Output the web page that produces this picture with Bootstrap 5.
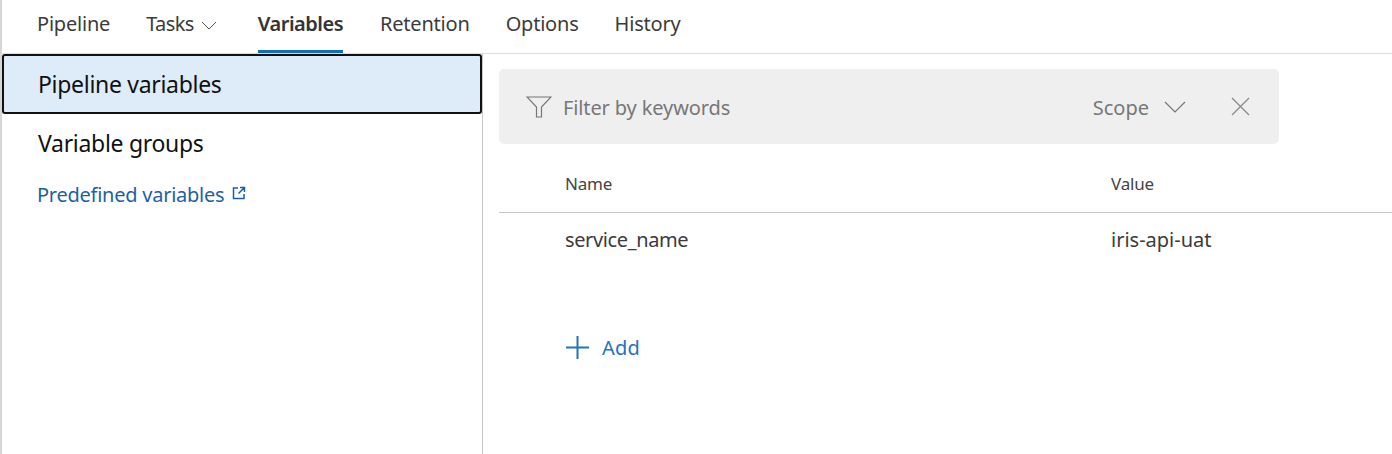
<!DOCTYPE html>
<html lang="en">
<head>
    <meta charset="UTF-8">
    <meta name="viewport" content="width=device-width, initial-scale=1.0">
    <title>Pipeline variables</title>
    <link rel="stylesheet" href="https://cdn.jsdelivr.net/npm/bootstrap@5.3.0/dist/css/bootstrap.min.css">
    <style>
        html, body { height: 100%; overflow: hidden; }
        body { font-family: "Noto Sans", "Open Sans", sans-serif; color: #3b3b3b; background: #fff; font-size: 20px; }
        .page-wrap { height: 454px; border-left: 2px solid #d6d6d6; }
        .tab-bar { height: 54px; border-bottom: 1px solid #dcdcdc; padding-left: 35px; gap: 36px; }
        .tab-item { height: 53px; padding-top: 10px; color: #3b3b3b; text-decoration: none; letter-spacing: -.2px; line-height: 27px; }
        .tab-item.on { font-weight: 600; border-bottom: 3px solid #106ebe; letter-spacing: -.5px; color: #333; margin-right: 1px; }
        .tab-item .tight { letter-spacing: -.6px; }
        .tab-item svg { margin-left: 7px; margin-right: 5px; vertical-align: 1px; }
        .side-pane { width: 481px; height: 400px; border-right: 1px solid #c8c8c8; flex: none; }
        .side-row { height: 59px; padding-left: 36px; font-size: 23px; line-height: 59px; color: #111; letter-spacing: -.3px; }
        .side-row.on { height: 60px; background: #deecf9; border: 2px solid #111; border-radius: 3px; line-height: 56px; padding-left: 34px; }
        .doc-link { display: block; margin-left: 35px; margin-top: 8px; color: #1d5fa5; text-decoration: none; line-height: 28px; letter-spacing: -.25px; }
        .doc-link svg { margin-left: 8px; vertical-align: 2px; }
        .main-pane { padding-left: 16px; }
        .filter-box { width: 780px; height: 75px; margin-top: 15px; background: #efefef; border-radius: 5px; color: #777; padding-left: 27px; }
        .filter-box .hint { margin-left: 11px; letter-spacing: -.12px; padding-top: 2px; }
        .scope-part { margin-left: auto; }
        .scope-part span { padding-top: 2px; }
        .scope-part svg { margin-left: 15px; }
        .clear-x { margin-left: 45px; margin-right: 29px; }
        .grid-head { height: 69px; border-bottom: 1px solid #c8c8c8; font-size: 17px; color: #444; padding-top: 27px; line-height: 26px; letter-spacing: -.2px; }
        .grid-row { padding-top: 12px; line-height: 30px; letter-spacing: -.38px; }
        .grid-row .val-cell { letter-spacing: 0; }
        .col-name { width: 612px; padding-left: 66px; flex: none; }
        .add-btn { margin-left: 66px; margin-top: 78px; color: #2273bf; line-height: 28px; gap: 12px; letter-spacing: .2px; }
        .add-btn span { padding-top: 1px; }
    </style>
</head>
<body>
    <div class="page-wrap">
        <!-- Tabs -->
        <div class="tab-bar d-flex">
            <a class="tab-item" href="#">Pipeline</a>
            <a class="tab-item" href="#"><span class="tight">Tasks</span><svg width="16" height="9" viewBox="0 0 16 9" fill="none" stroke="#555" stroke-width="1"><path d="M1 1l7 7 7-7"/></svg></a>
            <a class="tab-item on" href="#">Variables</a>
            <a class="tab-item" href="#">Retention</a>
            <a class="tab-item" href="#">Options</a>
            <a class="tab-item" href="#">History</a>
        </div>
        <div class="d-flex">
            <!-- Left menu -->
            <div class="side-pane">
                <div class="side-row on">Pipeline variables</div>
                <div class="side-row">Variable groups</div>
                <a class="doc-link" href="#">Predefined variables<svg width="14" height="14" viewBox="0 0 14 14" fill="none" stroke="#1d5fa5" stroke-width="1.5"><path d="M6 2H1.5v10.5H12V8M8 1.5h4.5V6M12.5 1.5L6.5 7.5"/></svg></a>
            </div>
            <!-- Variables -->
            <div class="main-pane flex-grow-1">
                <div class="filter-box d-flex align-items-center">
                    <svg width="26" height="22" viewBox="0 0 26 22" fill="none" stroke="#777" stroke-width="1.2"><path d="M1 1h24l-9.5 10v10h-5V11z"/></svg>
                    <span class="hint">Filter by keywords</span>
                    <span class="scope-part d-flex align-items-center"><span>Scope</span><svg width="22" height="12" viewBox="0 0 22 12" fill="none" stroke="#777" stroke-width="1.2"><path d="M1 1l10 10L21 1"/></svg></span>
                    <svg class="clear-x" width="19" height="19" viewBox="0 0 19 19" fill="none" stroke="#888" stroke-width="1.2"><path d="M1 1l17 17M18 1L1 18"/></svg>
                </div>
                <div class="grid-head d-flex">
                    <div class="col-name">Name</div>
                    <div>Value</div>
                </div>
                <div class="grid-row d-flex">
                    <div class="col-name">service_name</div>
                    <div class="val-cell">iris-api-uat</div>
                </div>
                <div class="add-btn d-flex align-items-center">
                    <svg width="25" height="25" viewBox="0 0 25 25" fill="none" stroke="#2273bf" stroke-width="2"><path d="M12.5 1v23M1 12.5h23"/></svg>
                    <span>Add</span>
                </div>
            </div>
        </div>
    </div>
    <script src="https://cdn.jsdelivr.net/npm/bootstrap@5.3.0/dist/js/bootstrap.bundle.min.js"></script>
</body>
</html>
